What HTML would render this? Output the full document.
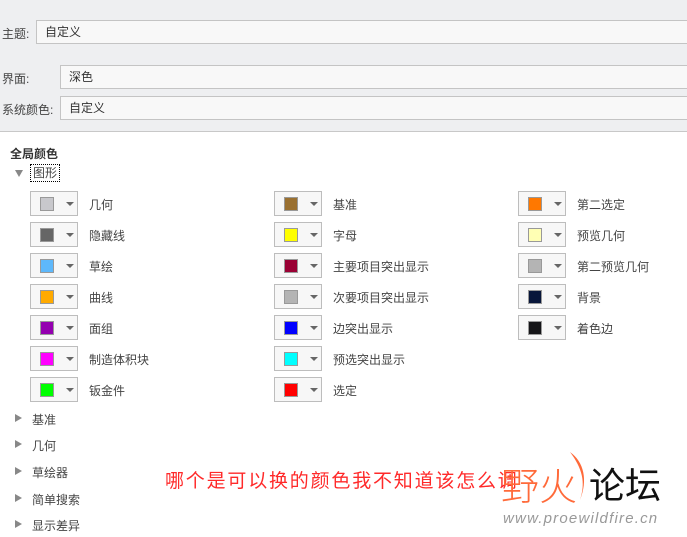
<!DOCTYPE html>
<html><head><meta charset="utf-8"><style>
body{margin:0;width:687px;height:537px;position:relative;overflow:hidden;background:#fff;font-family:"Liberation Sans","Noto Sans CJK SC",sans-serif;font-size:12px;color:#444}
.a{position:absolute;white-space:nowrap}
.top{position:absolute;left:0;top:0;width:687px;height:131px;background:#eeeff1;border-bottom:1px solid #c8c8c8}
.f{position:absolute;height:24px;background:#f8f8f8;border:1px solid #c4c4c4;box-sizing:border-box;line-height:22px;padding-left:8px;color:#333}
.b{position:absolute;width:48px;height:25px;box-sizing:border-box;border:1px solid #bdbdbd;background:#f7f7f7}
.b i{position:absolute;left:9px;top:5px;width:14px;height:14px;border:1px solid #999;box-sizing:border-box}
.b s{position:absolute;left:35px;top:10px;border-left:4px solid transparent;border-right:4px solid transparent;border-top:4px solid #666}
.t{position:absolute;left:15px;border-top:4px solid transparent;border-bottom:4px solid transparent;border-left:7px solid #888}
</style></head><body>
<div class="top"></div>
<div class="a" style="left:2px;top:25px">主题:</div>
<div class="f" style="left:36px;top:20px;width:660px">自定义</div>
<div class="a" style="left:2px;top:70px">界面:</div>
<div class="f" style="left:60px;top:65px;width:640px">深色</div>
<div class="a" style="left:2px;top:101px">系统颜色:</div>
<div class="f" style="left:60px;top:96px;width:640px">自定义</div>
<div class="a" style="left:10px;top:145px;font-weight:bold;color:#333">全局颜色</div>
<div class="a" style="left:15px;top:170px;border-left:4px solid transparent;border-right:4px solid transparent;border-top:7px solid #888"></div>
<div class="a" style="left:30px;top:164px;border:1px dotted #000;padding:0 2px;line-height:16px">图形</div>

<div class="b" style="left:30px;top:191px"><i style="background:#c8c8cc"></i><s></s></div><div class="a" style="left:89px;top:196px">几何</div>
<div class="b" style="left:30px;top:222px"><i style="background:#666"></i><s></s></div><div class="a" style="left:89px;top:227px">隐藏线</div>
<div class="b" style="left:30px;top:253px"><i style="background:#5eb8fb"></i><s></s></div><div class="a" style="left:89px;top:258px">草绘</div>
<div class="b" style="left:30px;top:284px"><i style="background:#ffaa00"></i><s></s></div><div class="a" style="left:89px;top:289px">曲线</div>
<div class="b" style="left:30px;top:315px"><i style="background:#9400b0"></i><s></s></div><div class="a" style="left:89px;top:320px">面组</div>
<div class="b" style="left:30px;top:346px"><i style="background:#ff00ff"></i><s></s></div><div class="a" style="left:89px;top:351px">制造体积块</div>
<div class="b" style="left:30px;top:377px"><i style="background:#00ff00"></i><s></s></div><div class="a" style="left:89px;top:382px">钣金件</div>

<div class="b" style="left:274px;top:191px"><i style="background:#9a7030"></i><s></s></div><div class="a" style="left:333px;top:196px">基准</div>
<div class="b" style="left:274px;top:222px"><i style="background:#ffff00"></i><s></s></div><div class="a" style="left:333px;top:227px">字母</div>
<div class="b" style="left:274px;top:253px"><i style="background:#9a0034"></i><s></s></div><div class="a" style="left:333px;top:258px">主要项目突出显示</div>
<div class="b" style="left:274px;top:284px"><i style="background:#b4b4b4"></i><s></s></div><div class="a" style="left:333px;top:289px">次要项目突出显示</div>
<div class="b" style="left:274px;top:315px"><i style="background:#0000ff"></i><s></s></div><div class="a" style="left:333px;top:320px">边突出显示</div>
<div class="b" style="left:274px;top:346px"><i style="background:#00ffff"></i><s></s></div><div class="a" style="left:333px;top:351px">预选突出显示</div>
<div class="b" style="left:274px;top:377px"><i style="background:#ff0000"></i><s></s></div><div class="a" style="left:333px;top:382px">选定</div>

<div class="b" style="left:518px;top:191px"><i style="background:#ff7800"></i><s></s></div><div class="a" style="left:577px;top:196px">第二选定</div>
<div class="b" style="left:518px;top:222px"><i style="background:#ffffb4"></i><s></s></div><div class="a" style="left:577px;top:227px">预览几何</div>
<div class="b" style="left:518px;top:253px"><i style="background:#b4b4b4"></i><s></s></div><div class="a" style="left:577px;top:258px">第二预览几何</div>
<div class="b" style="left:518px;top:284px"><i style="background:#08163a"></i><s></s></div><div class="a" style="left:577px;top:289px">背景</div>
<div class="b" style="left:518px;top:315px"><i style="background:#151518"></i><s></s></div><div class="a" style="left:577px;top:320px">着色边</div>

<div class="t" style="top:414px"></div><div class="a" style="left:32px;top:411px">基准</div>
<div class="t" style="top:440px"></div><div class="a" style="left:32px;top:437px">几何</div>
<div class="t" style="top:467px"></div><div class="a" style="left:32px;top:464px">草绘器</div>
<div class="t" style="top:494px"></div><div class="a" style="left:32px;top:491px">简单搜索</div>
<div class="t" style="top:520px"></div><div class="a" style="left:32px;top:517px">显示差异</div>

<div class="a" style="left:165px;top:466px;font-size:19px;color:#ff2a2a;letter-spacing:1.8px">哪个是可以换的颜色我不知道该怎么调</div>
<svg class="a" style="left:562px;top:452px" width="30" height="50" viewBox="0 0 30 50"><path d="M8 0 C22 10 26 28 18 48 C24 30 20 16 8 0Z" fill="#ff6a3a"/></svg>
<div class="a" style="left:501px;top:468px;font-size:38px;color:#ff6a3a;line-height:40px;font-weight:300">野火</div>
<div class="a" style="left:589px;top:466px;font-size:36px;color:#111;line-height:40px">论坛</div>
<div class="a" style="left:503px;top:510px;font-size:15px;color:#999;font-style:italic;letter-spacing:1.2px">www.proewildfire.cn</div>
</body></html>
